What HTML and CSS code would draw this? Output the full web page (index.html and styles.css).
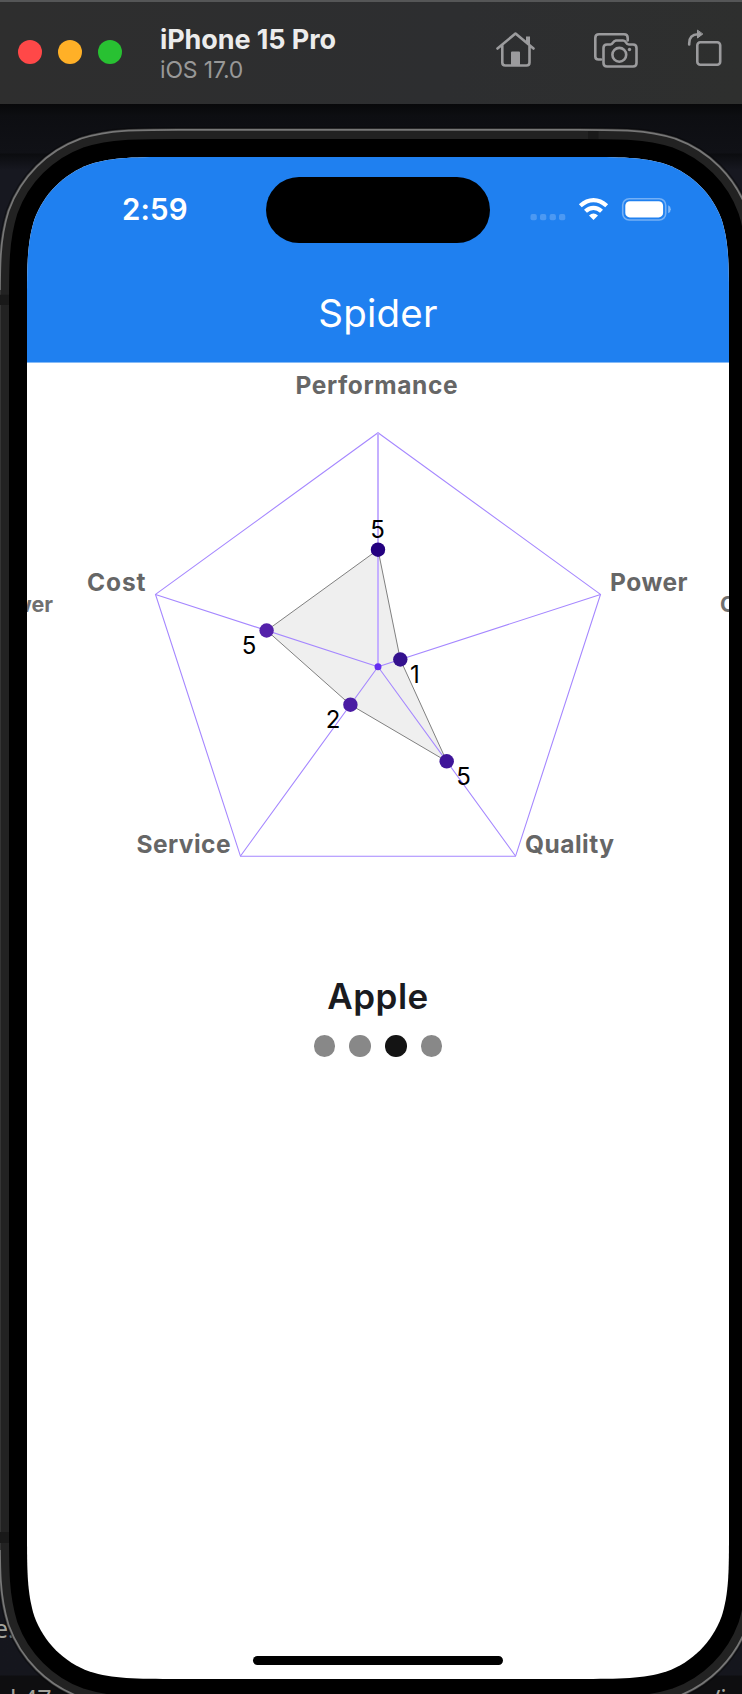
FILE: index.html
```html
<!DOCTYPE html>
<html lang="en">
<head>
<meta charset="utf-8">
<title>iPhone 15 Pro</title>
<link rel="stylesheet" href="styles.css">
</head>
<body>
<header class="toolbar">
  <div class="lights"><i class="light red"></i><i class="light amber"></i><i class="light green"></i></div>
  <div class="device">
    <div class="device-name">iPhone 15 Pro</div>
    <div class="device-os">iOS 17.0</div>
  </div>
  <svg class="tools" viewBox="0 0 250 60" fill="none" stroke="#9b9b9d" stroke-width="2.6" stroke-linecap="round" stroke-linejoin="round">
    <path d="M5.500 28.500 23.500 13.500 41.500 28.500M10.300 25.500V42.500Q10.300 45.500 13.300 45.500H34.500Q37.500 45.500 37.500 42.500V25.500"/>
    <path d="M19 45V32.500Q19 31.500 20 31.500H27Q28 31.500 28 32.500V45ZM34 16.500H38V25L34 22Z" fill="#9b9b9d" stroke="none"/>
    <path d="M109 39.500H106.500Q103.300 39.500 103.300 36.500V18Q103.300 14.300 107 14.300H132Q135.700 14.300 135.700 18V20.500"/>
    <path d="M115 24.500H118.500Q120 24.500 121 22.700T124 20.500H131Q133 20.500 134 22.500T137 24.500H141Q144.500 24.500 144.500 28V43Q144.500 46.500 141 46.500H115Q111.500 46.500 111.500 43V28Q111.500 24.500 115 24.500Z"/>
    <circle cx="127.300" cy="34.800" r="6.900"/><circle cx="137.500" cy="29.500" r="1.700" fill="#9b9b9d" stroke="none"/>
    <rect x="205.300" y="22.300" width="22.900" height="22.400" rx="3"/>
    <path d="M197.200 24.500V23.500Q197.200 14.200 206 14.200"/>
    <path d="M205.500 10.500V18L210.500 14.200Z" fill="#9b9b9d" stroke-width="1"/>
  </svg>
</header>

<main class="stage">
  <span class="backdrop-text line-a">e.</span>
  <span class="backdrop-text line-b">l 47</span>
  <span class="backdrop-text line-c">/i</span>
  <svg class="bezel" viewBox="0 104 742 1590">
    <defs>
      <path id="body" d="M178.300 157H577.700c43.500 0 65.300 0 88.800 7.400c25.600 9.300 45.800 29.500 55.100 55.100c7.400 23.500 7.400 45.300 7.400 88.800V1527.700c0 43.500 0 65.300-7.400 88.800c-9.300 25.600-29.500 45.800-55.100 55.100c-23.500 7.400-45.300 7.400-88.800 7.400H178.300c-43.500 0-65.300 0-88.800-7.400c-25.600-9.300-45.800-29.500-55.100-55.100c-7.400-23.500-7.400-45.300-7.400-88.800V308.300c0-43.500 0-65.300 7.400-88.800c9.300-25.600 29.500-45.800 55.100-55.100c23.500-7.400 45.300-7.400 88.800-7.400z"/>
    </defs>
    <use href="#body" stroke="#08080a" stroke-width="60" opacity=".5"/>
    <use href="#body" stroke="#333" stroke-width="57.500"/>
    <use href="#body" stroke="#777" stroke-width="56"/>
    <use href="#body" stroke="#222" stroke-width="52.500"/>
    <path d="M.5 290V1550" stroke="#343434"/>
    <path d="M0 294.700H9V305H0ZM588 131H598.500V139H588ZM0 1532H9V1543H0Z" fill="#191919"/>
    <use href="#body" fill="#000" stroke="#000" stroke-width="36"/>
  </svg>

  <section class="screen">
    <div class="app-header">
      <div class="status">
        <time class="clock">2:59</time>
        <div class="island"></div>
        <svg class="indicators" viewBox="525 192 150 34">
          <g fill="#fff" opacity=".2"><rect x="530.500" y="214" width="6.300" height="6.300" rx="2"/><rect x="540" y="214" width="6.300" height="6.300" rx="2"/><rect x="549.600" y="214" width="6.300" height="6.300" rx="2"/><rect x="559" y="214" width="6.300" height="6.300" rx="2"/></g>
          <g fill="none" stroke="#fff" stroke-width="4.200">
            <path d="M580.300 205.800Q586.500 200.100 593.500 200.100T606.700 205.800"/>
            <path d="M585.500 211.300Q589 207.900 593.500 207.900T601.500 211.300"/>
          </g>
          <path d="M593.500 220 589 215.500Q593.500 211.500 598 215.500Z" fill="#fff"/>
          <rect x="622.700" y="198.700" width="43" height="21.300" rx="6.500" fill="none" stroke="#fff" stroke-width="1.600" opacity=".38"/>
          <rect x="625.300" y="201.200" width="37.800" height="16.200" rx="4.500" fill="#fff"/>
          <path d="M668.200 205.300Q670.800 206.500 670.800 209.300T668.200 213.300Z" fill="#fff" opacity=".45"/>
        </svg>
      </div>
      <h1 class="title">Spider</h1>
    </div>

    <svg class="chart" viewBox="27 363 702 560">
      <g class="neighbour"><text x="53" y="611.500" text-anchor="end">Power</text><text x="720" y="611.500">Cost</text></g>
      <path d="M378 549.700 400.300 659.500 446.700 761.300 350.300 704.700 266.700 630.500Z" fill="#efefef" stroke="#808080"/>
      <g class="grid">
        <path d="M378 432.700 600.500 594.400 515.500 856.300H240.500L155.500 594.400Z"/>
        <path d="M378 666.700 600.500 594.400M378 666.700 515.500 856M378 666.700 240.500 856M378 666.700 155.500 594.400"/>
        <path class="upright" d="M378 432.700V666.700"/>
      </g>
      <circle cx="378" cy="666.700" r="3.500" fill="#652df0"/>
      <circle cx="378" cy="549.700" r="7.200" fill="#240080"/>
      <circle cx="400.300" cy="659.500" r="7.200" fill="#34118e"/>
      <circle cx="446.700" cy="761.300" r="7.200" fill="#3f1599"/>
      <circle cx="350.400" cy="704.700" r="7.200" fill="#4a1ba3"/>
      <circle cx="266.600" cy="630.500" r="7.200" fill="#5421aa"/>
      <g class="axis">
        <text x="295.500" y="393.500" textLength="162">Performance</text>
        <text x="87" y="591.300" textLength="58.500">Cost</text>
        <text x="610" y="591.300" textLength="77.500">Power</text>
        <text x="136.500" y="852.800" textLength="94">Service</text>
        <text x="525" y="852.800" textLength="89">Quality</text>
      </g>
      <g class="value">
        <text x="377.500" y="537.500">5</text>
        <text x="415" y="682.700">1</text>
        <text x="463.500" y="784.500">5</text>
        <text x="333" y="728">2</text>
        <text x="249" y="653.500">5</text>
      </g>
    </svg>

    <h2 class="brand">Apple</h2>
    <div class="pager"><i class="dot"></i><i class="dot"></i><i class="dot active"></i><i class="dot"></i></div>
    <div class="home-bar"></div>
  </section>
</main>
</body>
</html>
```
FILE: styles.css
```css
* { box-sizing: border-box; }
html { overflow: hidden; }
body {
  margin: 0;
  width: 742px;
  height: 1694px;
  overflow: hidden;
  display: flex;
  flex-direction: column;
  background: #0e0f13;
  font-family: Inter, "Liberation Sans", sans-serif;
}
.toolbar {
  height: 104px;
  flex: none;
  display: flex;
  align-items: flex-start;
  background: linear-gradient(100deg, #2e2e2e, #2d2e30 60%, #2e2f2e);
  border-top: 2px solid #555657;
}
.lights { display: flex; gap: 16px; padding: 38px 0 0 18px; }
.light { width: 24px; height: 24px; border-radius: 50%; }
.red { background: #ff4848; }
.amber { background: #ffb027; }
.green { background: #28c132; }
.device { flex: none; padding: 22px 0 0 38px; width: 370px; white-space: nowrap; }
.device-name { font-size: 27px; line-height: 32px; font-weight: 700; letter-spacing: -.1px; color: #ececec; }
.device-os { font-size: 23px; line-height: 28px; letter-spacing: -.15px; color: #989898; }
.tools { flex: none; width: 250px; height: 60px; margin-top: 18px; }

.stage {
  position: relative;
  flex: 1;
  padding: 53px 13px 0 27px;
  overflow: hidden;
  background: linear-gradient(#08080a 0, #0d0e12 12px, #101116 49px, #0b0c0f 50px, #171820 66px, #171821 400px, #15161d 1571px, #0e0e10 1572px);
}
.backdrop-text { position: absolute; font: 25px/28px "Noto Sans", sans-serif; color: #a3a39c; white-space: pre; }
.line-a { left: -6px; top: 1510px; }
.line-b { left: 10px; top: 1580px; }
.line-c { left: 711px; top: 1580px; }
.bezel { position: absolute; inset: 0; width: 742px; height: 1590px; fill: none; }

.screen {
  position: relative;
  width: 702px;
  height: 1522px;
  background: #fff;
  display: flex;
  flex-direction: column;
  align-items: center;
  clip-path: path("M151.300 0H550.700c43.500 0 65.300 0 88.800 7.400c25.600 9.300 45.800 29.500 55.100 55.100c7.400 23.500 7.400 45.300 7.400 88.800V1370.700c0 43.500 0 65.300-7.400 88.800c-9.300 25.600-29.500 45.800-55.100 55.100c-23.500 7.400-45.300 7.400-88.800 7.400H151.300c-43.500 0-65.300 0-88.800-7.400c-25.600-9.300-45.800-29.500-55.100-55.100c-7.400-23.500-7.400-45.300-7.400-88.800V151.300c0-43.500 0-65.300 7.400-88.800c9.300-25.600 29.500-45.800 55.100-55.100c23.500-7.400 45.300-7.400 88.800-7.400z");
}
.app-header { width: 702px; height: 206px; flex: none; background: #1f80f0; border-bottom: 1px solid #86bbf7; color: #fff; }
.status { height: 86px; display: grid; grid-template-columns: 239px 224px 239px; }
.clock { padding: 35px 0 0 95px; font-size: 29.500px; line-height: 35px; font-weight: 600; letter-spacing: .1px; }
.island { height: 66px; margin-top: 20px; border-radius: 33px; background: #000; }
.indicators { width: 150px; height: 34px; margin: 35px 0 0 35px; }
.title { margin: 46px 0 0; font-size: 38.500px; line-height: 48px; font-weight: 400; letter-spacing: .2px; text-align: center; }
.chart { width: 702px; height: 560px; flex: none; }
.grid { fill: none; stroke: #a587ff; stroke-width: 1.100; }
.upright { stroke: #c5b0ff; stroke-width: 2; }
.axis { font-size: 24.500px; font-weight: 700; fill: #666; }
.neighbour { font-size: 21.500px; font-weight: 700; fill: #707070; }
.value { font-size: 24px; fill: #000; text-anchor: middle; }
.brand { margin: 50.500px 0 0; font-size: 35px; line-height: 44px; font-weight: 600; letter-spacing: .5px; color: #1a1b1f; }
.pager { display: flex; gap: 14px; margin-top: 17.500px; }
.dot { width: 21.700px; height: 21.700px; border-radius: 50%; background: #888; }
.active { background: #141414; }
.home-bar { width: 250px; height: 9px; border-radius: 5px; background: #000; margin-top: auto; margin-bottom: 14.500px; }
```
